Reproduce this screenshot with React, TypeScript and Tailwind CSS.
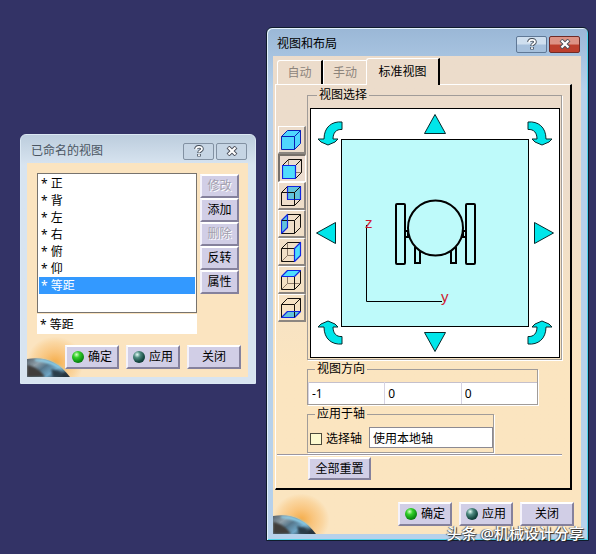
import { useState } from "react";
import type { ReactNode } from "react";

const FONT = "font-['Noto_Sans','Noto_Sans_CJK_SC',sans-serif]";

const VIEWS = ["正", "背", "左", "右", "俯", "仰", "等距"];

type Face = "solid" | "front" | "back" | "left" | "right" | "top" | "bottom";

const FACES: { id: Face; label: string }[] = [
  { id: "solid", label: "等轴测" },
  { id: "front", label: "正视图" },
  { id: "back", label: "背视图" },
  { id: "left", label: "左视图" },
  { id: "right", label: "右视图" },
  { id: "top", label: "俯视图" },
  { id: "bottom", label: "仰视图" },
];

const FACE_POINTS: Record<Exclude<Face, "solid">, string> = {
  front: "0.5,7.5 13.5,7.5 13.5,20.5 0.5,20.5",
  back: "6.5,1.5 19.5,1.5 19.5,14.5 6.5,14.5",
  left: "0.5,7.5 6.5,1.5 6.5,14.5 0.5,20.5",
  right: "13.5,7.5 19.5,1.5 19.5,14.5 13.5,20.5",
  top: "0.5,7.5 6.5,1.5 19.5,1.5 13.5,7.5",
  bottom: "0.5,20.5 6.5,14.5 19.5,14.5 13.5,20.5",
};

function CubeIcon({ face }: { face: Face }) {
  if (face === "solid") {
    return (
      <svg width="21" height="21" viewBox="0 0 21 21" stroke="#0a1fb4" strokeLinejoin="round" fill="#4fd6fd">
        <polygon points={FACE_POINTS.top} />
        <polygon points={FACE_POINTS.right} />
        <polygon points={FACE_POINTS.front} />
      </svg>
    );
  }
  const hidden = face === "back" || face === "left" || face === "bottom";
  const highlight = (
    <polygon
      points={FACE_POINTS[face]}
      fill={hidden ? "#62c3dc" : "#4fdcfd"}
      stroke="#1226e0"
      strokeWidth="1.2"
    />
  );
  return (
    <svg width="21" height="21" viewBox="0 0 21 21" fill="none" stroke="#15110d" strokeLinejoin="round">
      {hidden ? highlight : <path d="M6.500 1.500V14.500H19.500M6.500 14.500L0.500 20.500" stroke="#8d7a68" />}
      <path d="M0.500 7.500H13.500V20.500H0.500ZM0.500 7.500L6.500 1.500H19.500V14.500L13.500 20.500M13.500 7.500L19.500 1.500" />
      {hidden ? (
        <polygon points={FACE_POINTS[face]} stroke="#1226e0" />
      ) : (
        highlight
      )}
      {face === "back" && <path d="M6.500 7.500H13.500V14.500" />}
    </svg>
  );
}

function PushButton({ children, className = "", disabled = false }: { children: ReactNode; className?: string; disabled?: boolean }) {
  return (
    <button
      type="button"
      disabled={disabled}
      className={`flex items-center justify-center gap-1 whitespace-nowrap border-2 border-t-white border-l-[#f4f2fb] border-r-[#85819c] border-b-[#85819c] bg-[#d1cee6] text-xs leading-4 text-black disabled:text-[#a3a0ae] disabled:[text-shadow:1px_1px_0_#fff] ${className}`}
    >
      {children}
    </button>
  );
}

function Led({ on = false }: { on?: boolean }) {
  return (
    <span
      className={`size-3 shrink-0 rounded-full ${
        on
          ? "bg-[radial-gradient(circle_at_38%_30%,#d5ffc4_0,#32cf2a_28%,#0c8d12_65%,#044c08_100%)]"
          : "bg-[radial-gradient(circle_at_35%_30%,#e6fff8_0,#4e8a80_28%,#174a43_62%,#04211f_100%)]"
      }`}
    />
  );
}

function Footer() {
  return (
    <div className="relative flex justify-end gap-[7px]">
      <PushButton className="h-6 w-[54px]"><Led on />确定</PushButton>
      <PushButton className="h-6 w-[54px]"><Led />应用</PushButton>
      <PushButton className="h-6 w-[54px]">关闭</PushButton>
    </div>
  );
}

// Sunrise over a planet in the lower left corner of each dialog
function Planet() {
  return (
    <div className="pointer-events-none absolute bottom-0 left-0 h-10 w-14 overflow-hidden">
      <div className="absolute inset-0 bg-[radial-gradient(ellipse_at_50%_65%,#f5ac48_0,#f9c57e_30%,#fad6a1_55%,transparent_72%)]" />
      <svg className="absolute bottom-0 left-0" width="44" height="20" viewBox="0 0 44 20">
        <defs>
          <linearGradient id="globe" x1="0" y1="0" x2="1" y2="0.6">
            <stop offset="0" stopColor="#55616b" />
            <stop offset="0.3" stopColor="#8f9fa9" />
            <stop offset="0.5" stopColor="#56778c" />
            <stop offset="0.75" stopColor="#6fa6c6" />
            <stop offset="1" stopColor="#27343e" />
          </linearGradient>
          <filter id="soft">
            <feGaussianBlur stdDeviation="1" />
          </filter>
        </defs>
        <path d="M0 2C16-1 31 4 43 20H0Z" fill="url(#globe)" />
        <g filter="url(#soft)">
          <path d="M8 2C22 2 32 6 39 16C30 9 20 5 8 4Z" fill="#8fd2ec" />
          <path d="M0 8C8 9 14 14 18 20H0Z" fill="#3f3c3b" />
          <path d="M24 12L32 14L37 20H26Z" fill="#2c3d48" />
        </g>
      </svg>
    </div>
  );
}

function HelpGlyph() {
  return (
    <svg width="10" height="12" viewBox="0 0 10 12" fill="none">
      <path d="M2 4C2 1 8 1 8 4C8 5.800 5 5.600 5 8M5 9V11.500" stroke="#46505c" strokeWidth="3.600" />
      <path d="M2 4.500C2 1 8 1 8 4C8 5.800 5 5.600 5 7.500M5 9.200V11" stroke="#fff" strokeWidth="1.800" />
    </svg>
  );
}

function CloseGlyph() {
  return (
    <svg width="12" height="10" viewBox="0 0 12 10" fill="none">
      <path d="M2 1L10 9M10 1L2 9" stroke="#4c4f5a" strokeWidth="4" />
      <path d="M2.500 1.500L9.500 8.500M9.500 1.500L2.500 8.500" stroke="#fff" strokeWidth="2.200" />
    </svg>
  );
}

function TitleBar({ title, active = false }: { title: string; active?: boolean }) {
  return (
    <header className="flex h-7 items-center justify-between pt-1 pr-[2px] pl-1">
      <h2 className={`text-xs leading-4 ${active ? "text-black" : "text-[#4a5562]"}`}>{title}</h2>
      <div className="flex gap-[2px]">
        <button
          type="button"
          aria-label="帮助"
          className={`flex h-[17px] w-[31px] items-center justify-center rounded-[2px] border ${
            active
              ? "border-[#5f7896] bg-linear-to-b from-[#cfdfef] from-45% to-[#a6c0dc] to-55%"
              : "border-[#8291a2] bg-[#c6d5e4]"
          }`}
        >
          <HelpGlyph />
        </button>
        <button
          type="button"
          aria-label="关闭窗口"
          className={`flex h-[17px] w-[31px] items-center justify-center rounded-[2px] border ${
            active
              ? "border-[#6f2a26] bg-linear-to-b from-[#dd9285] from-45% to-[#bd3f2d] to-55%"
              : "border-[#8291a2] bg-[#c6d5e4]"
          }`}
        >
          <CloseGlyph />
        </button>
      </div>
    </header>
  );
}

function Group({ title, children, className = "" }: { title: string; children: ReactNode; className?: string }) {
  return (
    <fieldset className={`min-w-0 border border-[#a19c99] shadow-[1px_1px_0_#fff] ${className}`}>
      <legend className="ml-[7px] px-[2px] text-xs leading-4">{title}</legend>
      {children}
    </fieldset>
  );
}

function CurvedArrow({ label, className = "" }: { label: string; className?: string }) {
  return (
    <button type="button" aria-label={label} className={className}>
      <svg width="30" height="30" viewBox="0 0 30 30" className="overflow-visible">
        <path
          d="M31 13C21 12 13 18 13 30H7L10 33L17 36L24 33L27 30H22C22 24 25 20 31 20.500Z"
          fill="#00e6ea"
          stroke="#06282b"
        />
      </svg>
    </button>
  );
}

function Triangle({ label, className = "" }: { label: string; className?: string }) {
  return (
    <button type="button" aria-label={label} className={`flex items-center justify-center ${className}`}>
      <svg width="30" height="30" viewBox="0 0 30 30">
        <path d="M15 5.500L25.500 24.500H4.500Z" fill="#00e6ea" stroke="#06282b" />
      </svg>
    </button>
  );
}

function ViewCanvas() {
  return (
    <div className="grid grid-cols-[30px_1fr_30px] grid-rows-[30px_1fr_30px] border border-black bg-white">
      <CurvedArrow label="向左旋转" className="z-10" />
      <Triangle label="上" />
      <CurvedArrow label="向右旋转" className="z-10 -scale-x-100" />
      <Triangle label="左" className="-rotate-90" />
      <svg viewBox="0 0 188 188" className="block w-full">
        <rect x="0.5" y="0.5" width="187" height="187" fill="#befafa" stroke="#000" />
        <g fill="none" stroke="#000" strokeWidth="2">
          <rect x="55" y="65" width="9" height="60" rx="1" />
          <rect x="125" y="65" width="9" height="60" rx="1" />
          <path d="M74 108V124H79V112M110 112V124H115V108" />
          <path d="M64 92H67V98H64M125 92H122V98H125" />
          <circle cx="94.500" cy="89" r="27.500" />
        </g>
        <path d="M25.500 86V162.500H101" fill="none" stroke="#000" />
        <g fill="#d01c30" fontFamily="Liberation Sans, sans-serif" fontSize="15">
          <text x="24" y="89">z</text>
          <text x="100" y="163">y</text>
        </g>
      </svg>
      <Triangle label="右" className="rotate-90" />
      <CurvedArrow label="左下旋转" className="z-10 -scale-y-100" />
      <Triangle label="下" className="rotate-180" />
      <CurvedArrow label="右下旋转" className="z-10 -scale-100" />
    </div>
  );
}

function NamedViews() {
  const [selected, setSelected] = useState("等距");

  return (
    <section className="mt-[107px] rounded-t-md border border-[#dbe8f3] bg-linear-to-b from-[#bccddd] to-[#d8e4f0] to-12% px-[6px] pb-[6px]">
      <TitleBar title="已命名的视图" />
      <div className="relative mr-px bg-[#fbe4c0] pt-[10px] pb-2">
        <Planet />
        <div className="flex gap-[3px] pr-[9px] pl-[10px]">
          <div className="min-w-0 flex-1">
            <ul className="h-[140px] border border-[#77736e] bg-white px-px pt-px">
              {VIEWS.map((view) => (
                <li key={view}>
                  <button
                    type="button"
                    onClick={() => setSelected(view)}
                    className={`block h-[17px] w-full pl-[2px] text-left text-xs leading-[17px] ${
                      view === selected ? "bg-[#3399ff] text-white" : "text-black"
                    }`}
                  >
                    * {view}
                  </button>
                </li>
              ))}
            </ul>
            <input
              type="text"
              aria-label="视图名称"
              value={`* ${selected}`}
              readOnly
              className="mt-px block h-5 w-full bg-white px-[3px] text-xs"
            />
          </div>
          <div className="w-[39px] pt-px">
            <PushButton className="h-6 w-full" disabled>修改</PushButton>
            <PushButton className="h-6 w-full">添加</PushButton>
            <PushButton className="h-6 w-full" disabled>删除</PushButton>
            <PushButton className="h-6 w-full">反转</PushButton>
            <PushButton className="h-6 w-full">属性</PushButton>
          </div>
        </div>
        <div className="pt-[11px] pr-[7px]">
          <Footer />
        </div>
      </div>
    </section>
  );
}

function ViewsAndLayout() {
  const [face, setFace] = useState<Face>("front");
  const [direction, setDirection] = useState(["-1", "0", "0"]);

  return (
    <section className="rounded-t-md border border-[#0f1c2c] bg-linear-to-b from-[#9ab7d6] to-[#b7d1eb] to-12% px-[6px] pb-[6px] shadow-[inset_1px_1px_0_#e3f1fb,inset_-1px_-1px_0_#4fd3ea]">
      <TitleBar title="视图和布局" active />
      <div className="relative mr-px bg-linear-to-b from-[#ecdccb] from-25% to-[#fbe5c0] to-65% pt-[2px] pb-2">
        <Planet />
        <div role="tablist" className="flex items-end pl-1 text-xs">
          <button type="button" role="tab" aria-selected="false" disabled className="h-6 w-[46px] rounded-tl-[3px] border-t border-r-2 border-l border-t-white border-r-black border-l-white text-[#8d847b]">
            自动
          </button>
          <button type="button" role="tab" aria-selected="false" disabled className="h-6 w-[43px] border-t border-l border-white text-[#8d847b]">
            手动
          </button>
          <button type="button" role="tab" aria-selected="true" className="z-10 -mb-px h-[27px] w-[74px] rounded-tl-[3px] border-t border-r-2 border-l border-t-white border-r-black border-l-white bg-[#ecdccb]">
            标准视图
          </button>
        </div>

        <div role="tabpanel" className="relative mr-[9px] ml-[2px] border-t border-r-2 border-b-2 border-l border-t-white border-r-black border-b-black border-l-white pt-[2px] pb-2">
          <div className="flex gap-px pr-2 pl-[2px]">
            <div className="w-7 pt-[39px]">
              {FACES.map(({ id, label }) => (
                <button
                  key={id}
                  type="button"
                  aria-label={label}
                  aria-pressed={face === id}
                  onClick={() => setFace(id)}
                  className={`flex size-7 items-center justify-center border ${
                    face === id
                      ? "border-t-2 border-l-2 border-t-[#77706a] border-r-white border-b-white border-l-[#77706a] bg-[#ecdcd0]"
                      : "border-r-2 border-b-2 border-t-white border-r-[#8c8681] border-b-[#8c8681] border-l-white"
                  }`}
                >
                  <CubeIcon face={id} />
                </button>
              ))}
            </div>

            <div className="min-w-0 flex-1">
              <Group title="视图选择" className="pt-[5px] pr-px pb-px pl-[2px]">
                <ViewCanvas />
              </Group>

              <Group title="视图方向" className="mt-px mr-6 pt-[5px]">
                <div className="grid grid-cols-3 gap-px bg-[#d6d3e2] pl-px">
                  {direction.map((value, i) => (
                    <input
                      key={i}
                      type="text"
                      aria-label={`方向 ${["X", "Y", "Z"][i]}`}
                      value={value}
                      onChange={(e) => setDirection(direction.map((d, j) => (j === i ? e.target.value : d)))}
                      className="h-[22px] w-full min-w-0 border-t border-[#c4c0cc] bg-white px-[3px] text-xs"
                    />
                  ))}
                </div>
              </Group>

              <Group title="应用于轴" className="mt-px mr-[68px] pt-[5px] pb-1">
                <div className="flex items-center justify-between pl-[2px]">
                  <label className="flex items-center gap-1 pt-[3px] text-xs leading-4 whitespace-nowrap">
                    <input type="checkbox" className="size-3 appearance-none border border-[#4c4a3c] bg-[#fdfad0] checked:bg-[#3399ff]" />
                    选择轴
                  </label>
                  <input
                    type="text"
                    aria-label="轴"
                    defaultValue="使用本地轴"
                    className="h-[21px] w-[124px] border border-[#8c8a92] bg-white px-[3px] text-xs"
                  />
                </div>
              </Group>
            </div>
          </div>
          <hr className="mt-px mr-2 ml-px border-t border-[#9b96a0] shadow-[0_1px_0_#fff]" />
          <div className="mt-[2px] pl-8">
            <PushButton className="h-[23px] w-[63px]">全部重置</PushButton>
          </div>
        </div>

        <div className="pt-3 pr-[7px]">
          <Footer />
        </div>
      </div>
    </section>
  );
}

export default function App() {
  return (
    <main className={`relative min-h-screen overflow-hidden bg-[#333366] pt-[27px] pr-[7px] pb-[13px] pl-5 text-black ${FONT}`}>
      <div className="relative grid grid-cols-[236fr_323fr] items-start gap-[10px]">
        <NamedViews />
        <ViewsAndLayout />
        <p className="pointer-events-none absolute right-[5px] -bottom-[2px] z-20 text-[15px] leading-5 font-medium whitespace-nowrap text-white [text-shadow:1px_1px_1px_#222,-1px_0_1px_#555]">
          头条 @机械设计分享
        </p>
      </div>
    </main>
  );
}
